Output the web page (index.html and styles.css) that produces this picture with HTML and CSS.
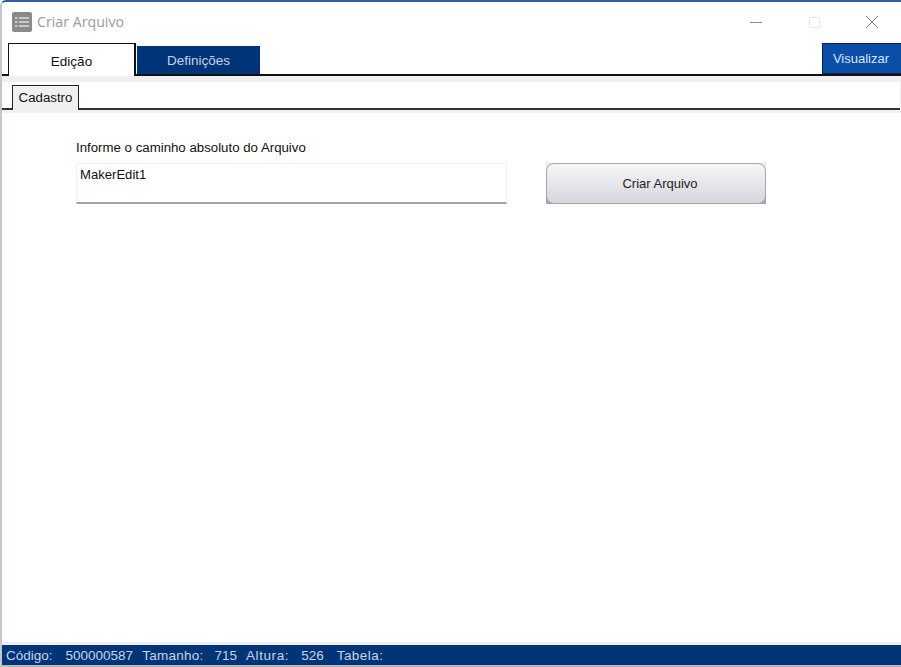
FILE: index.html
```html
<!DOCTYPE html>
<html lang="pt">
<head>
<meta charset="utf-8">
<title>Criar Arquivo</title>
<link rel="stylesheet" href="styles.css">
</head>
<body>
<div class="window">
  <header class="titlebar">
    <div class="title-left">
      <svg class="app-icon" width="20" height="20" viewBox="0 0 20 20">
        <rect width="20" height="20" rx="2" fill="#8a8a8a"/>
        <g fill="#c9c9c9">
          <rect x="3" y="5" width="2.5" height="2"/><rect x="7" y="5" width="10" height="2"/>
          <rect x="3" y="9" width="2.5" height="2"/><rect x="7" y="9" width="10" height="2"/>
          <rect x="3" y="13" width="2.5" height="2"/><rect x="7" y="13" width="10" height="2"/>
        </g>
      </svg>
      <span class="title-text">Criar Arquivo</span>
    </div>
    <div class="win-controls">
      <svg width="14" height="14" viewBox="0 0 14 14"><path d="M1 7.5h12" stroke="#8c8c8c" stroke-width="1"/></svg>
      <svg width="14" height="14" viewBox="0 0 14 14"><rect x="2.5" y="2.5" width="10" height="10" rx="1" fill="none" stroke="#e6e6e6"/></svg>
      <svg width="14" height="14" viewBox="0 0 14 14"><path d="M1 1l12 12M13 1L1 13" stroke="#808080" stroke-width="1" fill="none"/></svg>
    </div>
  </header>
  <nav class="main-tabs">
    <div class="tab tab-active">Edição</div>
    <div class="tab tab-inactive">Definições</div>
    <button class="view-btn">Visualizar</button>
  </nav>
  <div class="panel">
    <div class="sub-tabs">
      <div class="sub-tab">Cadastro</div>
    </div>
    <main class="content">
      <div class="field">
        <label class="field-label">Informe o caminho absoluto do Arquivo</label>
        <div class="edit">MakerEdit1</div>
      </div>
      <button class="create-btn"><span class="create-face">Criar Arquivo</span></button>
    </main>
  </div>
  <footer class="statusbar">
    <span class="s1">Código:</span><span class="s2">500000587</span><span class="s3">Tamanho:</span><span class="s4">715</span><span class="s5">Altura:</span><span class="s6">526</span><span class="s7">Tabela:</span>
  </footer>
</div>
</body>
</html>
```
FILE: styles.css
```css
* { box-sizing: border-box; }
html, body { margin: 0; height: 100%; background: #fff; overflow: hidden; }
body { font-family: "Liberation Sans", Arial, sans-serif; font-size: 12px; color: #111; }
.window {
  height: 667px;
  display: flex;
  flex-direction: column;
  background: #fff;
  border-top: 2px solid #2f5f9f;
  border-left: 2px solid #c4c8cc;
  border-bottom: 2px solid #b5b8bb;
  border-top-left-radius: 6px;
}
.titlebar {
  height: 41px;
  flex: none;
  display: flex;
  justify-content: space-between;
  align-items: center;
  padding: 0 21px 2px 10px;
}
.title-left { display: flex; align-items: center; gap: 5px; }
.title-text { font-size: 14.2px; color: #9a9a9a; font-family: "Open Sans", sans-serif; }
.win-controls { display: flex; gap: 44px; margin-right: 1px; }
.main-tabs {
  height: 33px;
  flex: none;
  display: flex;
  border-bottom: 2px solid #111;
  padding-left: 6px;
}
.tab { display: flex; align-items: center; justify-content: center; font-size: 13.5px; }
.tab-active {
  width: 128px;
  height: 33px;
  background: #fff;
  border: 1px solid #111;
  border-bottom: 0;
  position: relative;
  padding-top: 2px;
  border-right-width: 2px;
  z-index: 1;
}
.tab-inactive {
  width: 123px;
  height: 28px;
  margin: 3px 0 0 1px;
  background: #003478;
  color: #c8d4e6;
  padding-top: 1px;
}
.view-btn {
  margin-left: auto;
  width: 79px;
  height: 31px;
  background: #0a4ea8;
  color: #d8e4f4;
  border: 1.5px solid #0a2142;
  border-right: 0;
  font: 13px "Liberation Sans", Arial, sans-serif;
  padding: 0 2px 0 0;
}
.panel {
  flex: 1;
  display: flex;
  flex-direction: column;
  background: #f0f0f0;
  padding-top: 6px;
  min-height: 0;
}
.sub-tabs {
  height: 28px;
  flex: none;
  background: #fff;
  margin-right: 1px;
  padding: 3px 0 0 10px;
  border-bottom: 2px solid #333;
  display: flex;
}
.sub-tab {
  width: 67px;
  height: 25px;
  margin-bottom: -2px;
  background: #f0f0f0;
  border: 1px solid #222;
  border-bottom: 0;
  border-right-width: 1.5px;
  display: flex;
  align-items: center;
  justify-content: center;
  font-size: 13.25px;
  padding-bottom: 2px;
}
.content {
  flex: 1;
  margin: 3px 0 3px;
  background: #fff;
  display: flex;
  align-items: flex-start;
  padding: 27px 0 0 74px;
}
.field { width: 431px; }
.field-label { display: block; font-size: 13.25px; line-height: 16px; height: 23px; color: #111; }
.edit {
  height: 41px;
  padding: 3px 3px;
  font-size: 13.1px;
  line-height: 16px;
  border: 1px solid #f0f0f0;
  border-bottom: 2px solid #a5a5a5;
  background: #fff;
}
.create-btn {
  margin: 23px 0 0 39px;
  width: 220px;
  height: 41px;
  border: 0;
  background: linear-gradient(#e8e8e8 60%, #a8a8ac 60%);
  padding: 0;
  display: block;
}
.create-face {
  display: flex;
  align-items: center;
  justify-content: center;
  height: 100%;
  border: 1px solid #a8a8a8;
  border-radius: 8px;
  background: linear-gradient(#f6f6f8, #d6d6de);
  font: 13px "Liberation Sans", Arial, sans-serif;
  color: #222;
  padding-left: 8px;
}
.statusbar {
  height: 20px;
  flex: none;
  background: #003478;
  color: #c8d4e6;
  font-size: 13.5px;
  display: flex;
  align-items: center;
  padding-left: 4px;
}
.s1 { margin-right: 13px; }
.s2 { margin-right: 9px; }
.s3 { margin-right: 11px; letter-spacing: .25px; }
.s4 { margin-right: 9px; }
.s5 { margin-right: 12px; letter-spacing: .6px; }
.s6 { margin-right: 13px; }
.s7 { letter-spacing: .45px; }
```
